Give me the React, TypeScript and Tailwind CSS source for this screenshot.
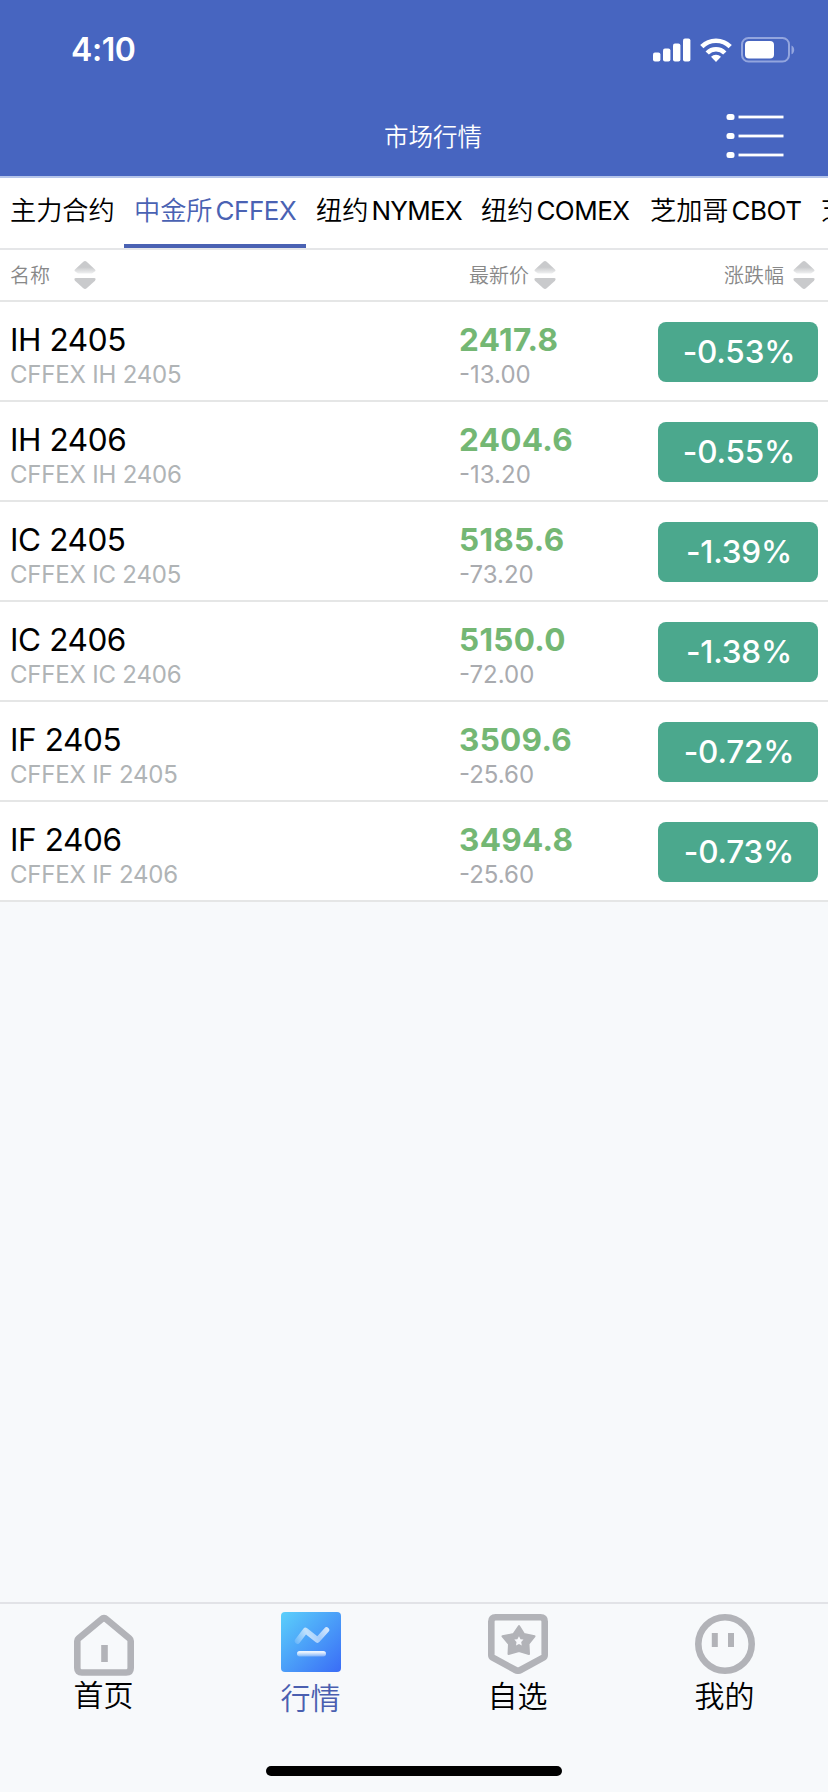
import { useState, ReactNode } from 'react';

const tabs = [
  { id: 'main', zh: '主力合约', en: '', width: 'w-[124px]', spacing: '' },
  { id: 'cffex', zh: '中金所', en: 'CFFEX', width: 'w-[182px]', spacing: 'tracking-[-0.5px]' },
  { id: 'nymex', zh: '纽约', en: 'NYMEX', width: 'w-[165px]', spacing: 'tracking-[-0.7px]' },
  { id: 'comex', zh: '纽约', en: 'COMEX', width: 'w-[169px]', spacing: 'tracking-[-0.5px]' },
  { id: 'cbot', zh: '芝加哥', en: 'CBOT', width: 'w-[171px]', spacing: 'tracking-[-0.5px]' },
  { id: 'cme', zh: '芝加哥', en: 'CME', width: 'w-[160px]', spacing: 'tracking-[-0.5px]' },
];

const quotes = [
  { name: 'IH 2405', price: '2417.8', change: '-13.00', percent: '-0.53%' },
  { name: 'IH 2406', price: '2404.6', change: '-13.20', percent: '-0.55%' },
  { name: 'IC 2405', price: '5185.6', change: '-73.20', percent: '-1.39%' },
  { name: 'IC 2406', price: '5150.0', change: '-72.00', percent: '-1.38%' },
  { name: 'IF 2405', price: '3509.6', change: '-25.60', percent: '-0.72%' },
  { name: 'IF 2406', price: '3494.8', change: '-25.60', percent: '-0.73%' },
];

function StatusBar() {
  return (
    <div className="flex h-[98px] items-center justify-between pl-[71px] pr-[33px] text-white">
      <span className="pt-0.5 text-[32px] font-semibold leading-10 tracking-[-0.4px]">4:10</span>
      <div className="flex items-center pt-0.5">
        <svg width="38" height="24" viewBox="0 0 38 24" fill="currentColor">
          <rect x="0" y="14.5" width="7.4" height="9" rx="2" />
          <rect x="10" y="10.5" width="7.4" height="13" rx="2" />
          <rect x="20" y="5.5" width="7.4" height="18" rx="2" />
          <rect x="30" y="0.5" width="7.4" height="23" rx="2" />
        </svg>
        <svg className="ml-[9px]" width="32" height="24" viewBox="0 0 32 24" fill="none" stroke="currentColor" strokeWidth="4.6">
          <path d="M1.800 8.700a20 20 0 0 1 28.400 0" />
          <path d="M7.200 15a12.300 12.300 0 0 1 17.600 0" />
          <path d="M16 24l-5-5.200a7 7 0 0 1 10 0z" fill="currentColor" stroke="none" />
        </svg>
        <svg className="ml-[9px]" width="54" height="26" viewBox="0 0 54 26">
          <rect x="1" y="1" width="47" height="23.5" rx="6.5" fill="none" stroke="#93a5de" strokeWidth="2" />
          <rect x="4" y="4" width="29" height="17.5" rx="4" fill="white" />
          <path d="M50.500 8.500c3.600 1.600 3.600 7.200 0 8.800z" fill="#93a5de" />
        </svg>
      </div>
    </div>
  );
}

function TitleBar() {
  return (
    <div className="relative flex h-[78px] items-center justify-center pl-[38px] text-white">
      <h1 className="text-[24.5px] font-[350] leading-9">市场行情</h1>
      <button className="absolute right-[43px] top-[14px]">
        <svg width="60" height="48" viewBox="0 0 60 48" fill="currentColor">
          <rect x="1.500" y="2" width="8" height="6" rx="2.500" />
          <rect x="13.500" y="3.600" width="45" height="2.800" />
          <rect x="1.500" y="21" width="8" height="6" rx="2.500" />
          <rect x="13.500" y="22.600" width="45" height="2.800" />
          <rect x="1.500" y="40" width="8" height="6" rx="2.500" />
          <rect x="13.500" y="41.600" width="45" height="2.800" />
        </svg>
      </button>
    </div>
  );
}

function SortIcon() {
  return (
    <svg width="22" height="30" viewBox="0 0 22 30">
      <defs>
        <linearGradient id="sortUp" x1="0" y1="0" x2="0" y2="1">
          <stop offset="0.5" stopColor="#c9cacc" />
          <stop offset="1" stopColor="#eff0f1" />
        </linearGradient>
      </defs>
      <path d="M9.300 1.700q1.700-1.400 3.400 0L21 9.500q1.200 1.500-.6 2.200L18 13.500H4L1.600 11.700Q-.2 11 1 9.500z" fill="url(#sortUp)" />
      <path d="M9.300 28.300q1.700 1.400 3.400 0L21 20.800q1.600-2.800-1-2.800H2q-2.600 0-1 2.800z" fill="#c9cacc" />
    </svg>
  );
}

function HomeIcon() {
  return (
    <svg width="60" height="62" viewBox="0 0 60 62" fill="none" stroke="#b2b3b8" strokeWidth="6.600">
      <path d="M27.300 5.500q2.700-2.400 5.400 0L55.500 24.500q1.200 1 1.200 2.500V54q0 4.500-4.500 4.500H7.800q-4.500 0-4.500-4.500V27q0-1.500 1.200-2.500z" />
      <path d="M30.500 31v17" />
    </svg>
  );
}

function MarketIcon() {
  return (
    <svg width="60" height="60" viewBox="0 0 60 60">
      <defs>
        <linearGradient id="marketBg" x1="0" y1="0" x2="1" y2="1">
          <stop offset="0" stopColor="#5bd0fb" />
          <stop offset="1" stopColor="#3a6cf6" />
        </linearGradient>
        <linearGradient id="marketLine" gradientUnits="userSpaceOnUse" x1="15" y1="32" x2="48" y2="16">
          <stop offset="0" stopColor="#fff" stopOpacity="0.15" />
          <stop offset="0.4" stopColor="#fff" stopOpacity="0.65" />
          <stop offset="0.65" stopColor="#fff" stopOpacity="0.5" />
          <stop offset="1" stopColor="#fff" stopOpacity="0.8" />
        </linearGradient>
        <linearGradient id="marketBar" x1="0" y1="0" x2="0" y2="1">
          <stop offset="0.2" stopColor="#fff" stopOpacity="0.9" />
          <stop offset="1" stopColor="#fff" stopOpacity="0.3" />
        </linearGradient>
      </defs>
      <rect width="60" height="60" rx="4" fill="url(#marketBg)" />
      <path d="M16.500 29L24.500 18.500L36.500 28L45.500 18" fill="none" stroke="url(#marketLine)" strokeWidth="5.500" strokeLinecap="round" strokeLinejoin="round" />
      <rect x="16" y="39" width="29" height="5.500" rx="2.700" fill="url(#marketBar)" />
    </svg>
  );
}

function FavoriteIcon() {
  return (
    <svg width="60" height="60" viewBox="0 0 60 60" fill="none" stroke="#b2b3b8">
      <path d="M7.500 3.300h45q4.200 0 4.200 4.200V41q0 1.800-1.500 2.700L32.500 56q-2.500 1.400-5 0L4.800 43.700Q3.300 42.800 3.300 41V7.500q0-4.200 4.200-4.200z" strokeWidth="6.600" />
      <path d="M31 12L36 20L46.500 22.300L40.500 30L41 40L31 37L20.500 40L21 30L14.500 22.300L25.500 20Z" fill="#b2b3b8" strokeWidth="2" strokeLinejoin="round" />
      <path d="M31 22.300l1.500 3 3 .3-2.300 2.400.6 3.500-2.800-1.400-3 1.400.5-3.500-2.200-2.400 3-.3z" fill="#f7f8fb" stroke="none" />
    </svg>
  );
}

function MineIcon() {
  return (
    <svg width="60" height="60" viewBox="0 0 60 60" fill="none" stroke="#b2b3b8">
      <circle cx="30" cy="30" r="26.700" strokeWidth="6.600" />
      <path d="M19.800 19v14M36 19v14" strokeWidth="6" />
    </svg>
  );
}

const navItems: { id: string; label: string; icon: ReactNode; pad: string; gap: string }[] = [
  { id: 'home', label: '首页', icon: <HomeIcon />, pad: 'pt-[10px]', gap: '-mt-[1px]' },
  { id: 'market', label: '行情', icon: <MarketIcon />, pad: 'pt-[8px]', gap: 'mt-[6px]' },
  { id: 'favorite', label: '自选', icon: <FavoriteIcon />, pad: 'pt-[10px]', gap: 'mt-[2px]' },
  { id: 'mine', label: '我的', icon: <MineIcon />, pad: 'pt-[10px]', gap: 'mt-[2px]' },
];

export default function App() {
  const [activeTab, setActiveTab] = useState('cffex');
  const [activeNav, setActiveNav] = useState('market');

  return (
    <div className="flex h-[1792px] w-[828px] flex-col overflow-hidden bg-[#f7f9fb] font-['Inter','Noto_Sans_CJK_SC',sans-serif] text-black">
      <header className="h-[178px] shrink-0 border-b-2 border-[#b5c5ea] bg-[#4765c0]">
        <StatusBar />
        <TitleBar />
      </header>

      {/* Exchange tabs */}
      <nav className="flex h-[72px] shrink-0 overflow-hidden border-b-2 border-[#e5e6e8] bg-white">
        {tabs.map((tab) => (
          <button
            key={tab.id}
            onClick={() => setActiveTab(tab.id)}
            className={`flex shrink-0 items-start whitespace-nowrap border-b-4 pl-2.5 pt-[15px] text-[26.2px] font-[350] leading-9 ${tab.width} ${
              activeTab === tab.id ? 'border-[#4a62b3] text-[#4a62b3]' : 'border-transparent'
            }`}
          >
            <span>{tab.zh}</span>
            {tab.en && <span className={`ml-[3px] text-[26px] font-normal ${tab.spacing}`}>{tab.en}</span>}
          </button>
        ))}
      </nav>

      {/* Column titles */}
      <div className="flex h-[52px] shrink-0 items-center border-b-2 border-[#e5e6e6] bg-white text-xl font-[350] leading-7 text-[#888888]">
        <div className="flex w-[469px] items-center gap-6 pl-2.5">
          <span className="pt-0.5">名称</span>
          <SortIcon />
        </div>
        <div className="flex flex-1 items-center gap-[5px]">
          <span className="pt-0.5">最新价</span>
          <SortIcon />
        </div>
        <div className="flex items-center gap-[9px] pr-[13px]">
          <span className="pt-0.5">涨跌幅</span>
          <SortIcon />
        </div>
      </div>

      <main className="flex-1">
        {quotes.map((quote) => (
          <div key={quote.name} className="flex h-[100px] items-start border-b-2 border-[#e5e6e6] bg-white pr-2.5">
            <div className="w-[459px] pl-2.5 pt-[18px]">
              <div className="text-[31.5px] leading-10 tracking-[-0.4px]">{quote.name}</div>
              <div className="text-2xl font-normal leading-[30px] tracking-[-0.2px] text-[#b0b4b6]">CFFEX {quote.name}</div>
            </div>
            <div className="flex-1 pt-[18px]">
              <div className="text-[31.5px] font-bold leading-10 tracking-[0.3px] text-[#74b774]">{quote.price}</div>
              <div className="text-2xl font-normal leading-[30px] text-[#a9abaf]">{quote.change}</div>
            </div>
            <div className="mt-5 flex h-[60px] w-40 items-center justify-center rounded-lg bg-[#4ba88d] pl-0.5 text-[31.5px] font-[550] tracking-[-0.2px] text-white">
              {quote.percent}
            </div>
          </div>
        ))}
      </main>

      {/* Bottom navigation */}
      <footer className="flex h-[190px] shrink-0 flex-col items-center border-t-2 border-[#e2e3e7]">
        <div className="grid h-[162px] w-full grid-cols-4">
          {navItems.map((item) => (
            <button
              key={item.id}
              onClick={() => setActiveNav(item.id)}
              className={`flex flex-col items-center ${item.pad} ${activeNav === item.id ? 'text-[#4a5fb0]' : ''}`}
            >
              {item.icon}
              <span className={`text-[30px] font-[350] leading-10 ${item.gap}`}>{item.label}</span>
            </button>
          ))}
        </div>
        <div className="h-2.5 w-[296px] rounded-full bg-black" />
      </footer>
    </div>
  );
}
